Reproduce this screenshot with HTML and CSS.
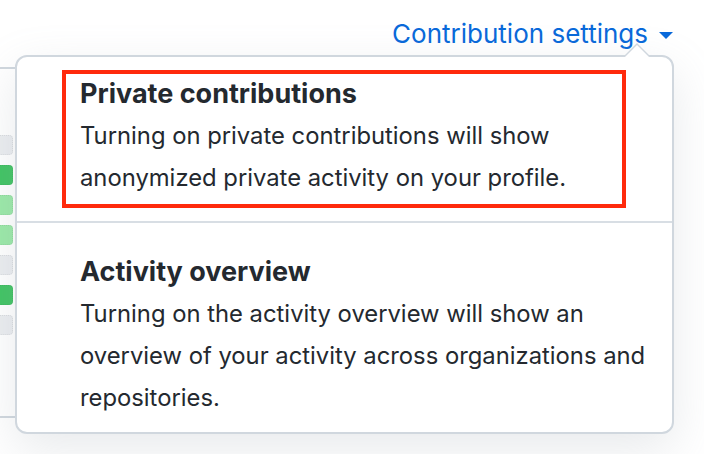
FILE: index.html
```html
<!DOCTYPE html>
<html lang="en">
<head>
<meta charset="utf-8">
<title>Contribution settings</title>
<link rel="stylesheet" href="styles.css">
</head>
<body>
<div class="page">
  <div class="graph">
    <div class="graph-cells">
      <span class="cell c0"></span>
      <span class="cell c3"></span>
      <span class="cell c1"></span>
      <span class="cell c1"></span>
      <span class="cell c0"></span>
      <span class="cell c3"></span>
      <span class="cell c0"></span>
    </div>
  </div>
  <div class="main">
    <header class="toolbar">
      <a class="settings-link" href="#">Contribution settings<span class="dropdown-caret"></span></a>
    </header>
    <div class="dropdown">
      <div class="item item-first">
        <div class="highlight">
          <h3 class="item-title">Private contributions</h3>
          <p class="item-desc">Turning on private contributions will show anonymized private activity on your profile.</p>
        </div>
      </div>
      <div class="divider"></div>
      <div class="item item-second">
        <h3 class="item-title">Activity overview</h3>
        <p class="item-desc">Turning on the activity overview will show an overview of your activity across organizations and repositories.</p>
      </div>
    </div>
  </div>
</div>
</body>
</html>
```

FILE: styles.css
```css
html, body {
  margin: 0;
  padding: 0;
  background: #ffffff;
}

body {
  font-family: Inter, "Noto Sans", "Liberation Sans", sans-serif;
  color: #24292f;
  width: 704px;
  height: 454px;
  overflow: hidden;
}

.page {
  display: flex;
  height: 454px;
}

.graph {
  width: 15px;
  flex: none;
  margin-top: 67px;
  height: 351px;
  box-sizing: border-box;
  border-top: 2px solid #d0d7de;
  border-bottom: 2px solid #d0d7de;
  background: #ffffff;
  overflow: hidden;
}

.graph-cells {
  display: flex;
  flex-direction: column;
  gap: 10px;
  margin-top: 66px;
  margin-left: -8px;
}

.cell {
  display: block;
  width: 21px;
  height: 20px;
  border-radius: 4px;
  box-sizing: border-box;
  outline: 1px dotted rgba(27, 31, 36, 0.08);
  outline-offset: -1px;
}

.c0 { background: #ebedf0; }
.c1 { background: #9be9a8; }
.c3 { background: #40c463; }

.main {
  width: 659px;
  flex: none;
}

.toolbar {
  height: 55px;
  box-sizing: border-box;
  padding-top: 12px;
  display: flex;
  justify-content: flex-end;
}

.settings-link {
  color: #0969da;
  text-decoration: none;
  font-size: 26px;
  line-height: 34px;
  display: flex;
  align-items: center;
  gap: 11px;
  margin-right: 1px;
}

.dropdown-caret {
  display: inline-block;
  width: 0;
  height: 0;
  border-style: solid;
  border-width: 7px 7px 0;
  border-color: #0969da transparent transparent;
  margin-top: 3px;
}

.dropdown {
  position: relative;
  background: #ffffff;
  border: 2px solid #d0d7de;
  border-radius: 12px;
  box-shadow: 0 16px 48px rgba(140, 149, 159, 0.2);
}

.dropdown::before,
.dropdown::after {
  content: "";
  position: absolute;
  width: 0;
  height: 0;
  border-style: solid;
  border-color: transparent;
}

.dropdown::before {
  top: -28px;
  right: 21px;
  border-width: 14px;
  border-bottom-color: #d0d7de;
}

.dropdown::after {
  top: -24px;
  right: 23px;
  border-width: 12px;
  border-bottom-color: #ffffff;
}

.item-title {
  margin: 0;
  font-size: 27px;
  line-height: 40px;
  font-weight: 700;
  color: #24292f;
}

.item-desc {
  margin: 0;
  font-size: 23.8px;
  line-height: 42px;
  color: #24292f;
}

.item-first {
  padding: 13px 0 13px 45px;
}

.highlight {
  width: 542px;
  border: 4px solid #ff2a0c;
  padding: 0 0 5px 14px;
}

.item-first .item-desc {
  margin-top: 1px;
}

.divider {
  height: 2px;
  background: #d8dee4;
}

.item-second {
  padding: 29px 8px 13px 63px;
}

.item-second .item-desc {
  margin-top: 1px;
}
```
